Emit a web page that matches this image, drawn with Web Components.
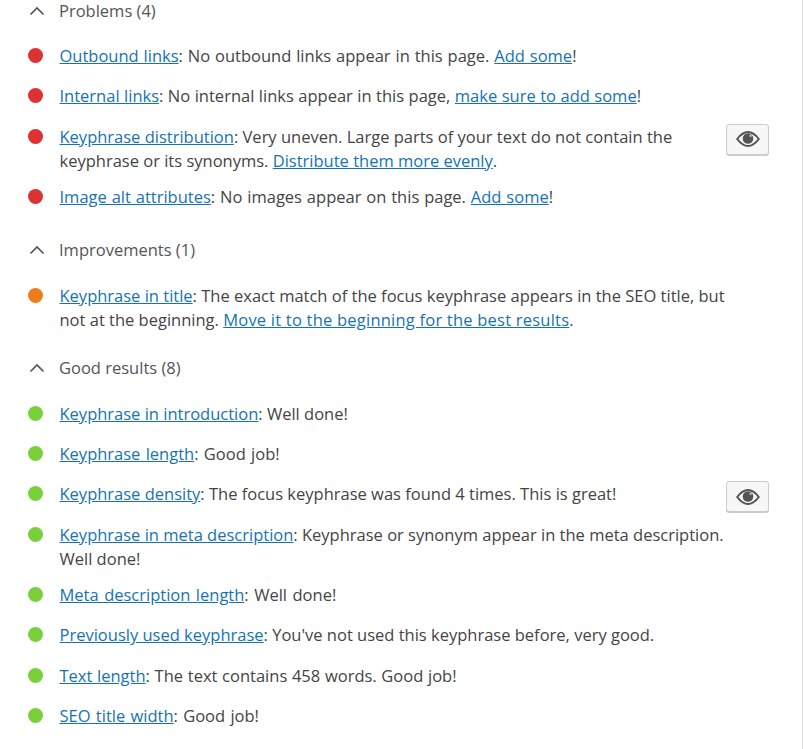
<!DOCTYPE html>
<html><head><meta charset="utf-8"><style>
html,body{margin:0;padding:0;background:#fff}
body{width:803px;height:749px;overflow:hidden;font-family:"Open Sans","Noto Sans",sans-serif;color:#444}
a{color:#1573b3;text-decoration:underline}
</style></head><body>
<template id="t-page"><style>
:host{display:block;box-sizing:border-box;height:749px;border-right:1px solid #ddd;overflow:hidden}
</style><slot></slot></template>
<template id="t-sec"><style>
:host{display:block;font-size:16.5px;line-height:24.3px}
.h{display:flex;align-items:center;height:24px;color:#555;padding-left:29px;gap:14px}
svg{display:block;width:16px;height:10px;flex:none}
.list{margin-top:var(--gap,21px);display:block}
</style><div class="h"><svg viewBox="0 0 16 10"><path d="M1.500 8.500 8 2l6.500 6.500" fill="none" stroke="#555" stroke-width="1.700"/></svg><span><slot name="title"></slot></span></div><div class="list"><slot></slot></div></template>
<template id="t-row"><style>
:host{display:flex;min-height:28.5px;margin-bottom:var(--mb,11.8px);padding-left:28px;width:769px;box-sizing:border-box;line-height:24.3px;font-size:16.5px}
.dot{flex:none;width:15px;height:15px;border-radius:50%;background:var(--c);margin-top:4px;margin-right:16.500px}
.txt{flex:none;width:666.5px}
.btn{flex:none;width:43px;height:31px;box-sizing:border-box;margin:-1px 0 -8px auto;border:1px solid #ccc;border-radius:3px;background:#f7f7f7;box-shadow:0 1px 0 #ccc;display:flex;align-items:center;justify-content:center}
.btn svg{width:24px;height:16px;display:block}
</style><span class="dot"></span><div class="txt"><slot></slot></div></template>
<y-page>
<y-sec style="margin-top:-1px"><span slot="title">Problems (4)</span>
<y-row c="#dc3232" style="word-spacing:.6px"><a href="#">Outbound links</a>: No outbound links appear in this page. <a href="#">Add some</a>!</y-row>
<y-row c="#dc3232" style="word-spacing:.2px"><a href="#">Internal links</a>: No internal links appear in this page, <a href="#">make sure to add some</a>!</y-row>
<y-row c="#dc3232" eye><a href="#">Keyphrase distribution</a>: Very uneven. Large parts of your text do not contain the keyphrase or its synonyms. <a href="#">Distribute them more evenly</a>.</y-row>
<y-row c="#dc3232" style="word-spacing:.6px"><a href="#">Image alt attributes</a>: No images appear on this page. <a href="#">Add some</a>!</y-row>
</y-sec>
<y-sec style="margin-top:25px;--gap:21.7px"><span slot="title">Improvements (1)</span>
<y-row c="#ee7c1b"><a href="#">Keyphrase in title</a>: The exact match of the focus keyphrase appears in the SEO title, but not at the beginning. <a href="#" style="letter-spacing:.22px">Move it to the beginning for the best results</a>.</y-row>
</y-sec>
<y-sec style="margin-top:23.3px;--gap:21.8px;--mb:11.8px"><span slot="title">Good results (8)</span>
<y-row c="#7ad03a"><a href="#">Keyphrase in introduction</a>: Well done!</y-row>
<y-row c="#7ad03a" style="word-spacing:1px"><a href="#">Keyphrase length</a>: Good job!</y-row>
<y-row c="#7ad03a" eye><a href="#">Keyphrase density</a>: The focus keyphrase was found 4 times. This is great!</y-row>
<y-row c="#7ad03a"><a href="#">Keyphrase in meta description</a>: Keyphrase or synonym appear in the meta description. Well done!</y-row>
<y-row c="#7ad03a" style="word-spacing:1.2px"><a href="#">Meta description length</a>: Well done!</y-row>
<y-row c="#7ad03a"><a href="#">Previously used keyphrase</a>: You've not used this keyphrase before, very good.</y-row>
<y-row c="#7ad03a" style="word-spacing:.4px"><a href="#">Text length</a>: The text contains 458 words. Good job!</y-row>
<y-row c="#7ad03a" style="word-spacing:1px"><a href="#">SEO title width</a>: Good job!</y-row>
</y-sec>
</y-page>
<script>
function base(id){return class extends HTMLElement{constructor(){super();this.attachShadow({mode:'open'}).appendChild(document.getElementById(id).content.cloneNode(true));}}}
customElements.define('y-page',base('t-page'));
customElements.define('y-sec',base('t-sec'));
customElements.define('y-row',class extends base('t-row'){connectedCallback(){this.style.setProperty('--c',this.getAttribute('c'));
if(this.hasAttribute('eye')&&!this.shadowRoot.querySelector('.btn')){const b=document.createElement('div');b.className='btn';b.innerHTML='<svg viewBox="0 0 24 16"><path fill="none" stroke="#555" stroke-width="2" d="M1.200 8C4.800 3.200 8.300 1 12 1s7.200 2.200 10.800 7C19.200 12.800 15.700 15 12 15S4.800 12.800 1.200 8z"/><circle cx="12" cy="7.500" r="5.300" fill="#555"/><circle cx="14.600" cy="4.800" r="1.100" fill="#ddd"/></svg>';this.shadowRoot.appendChild(b);}}});
</script>
</body></html>
